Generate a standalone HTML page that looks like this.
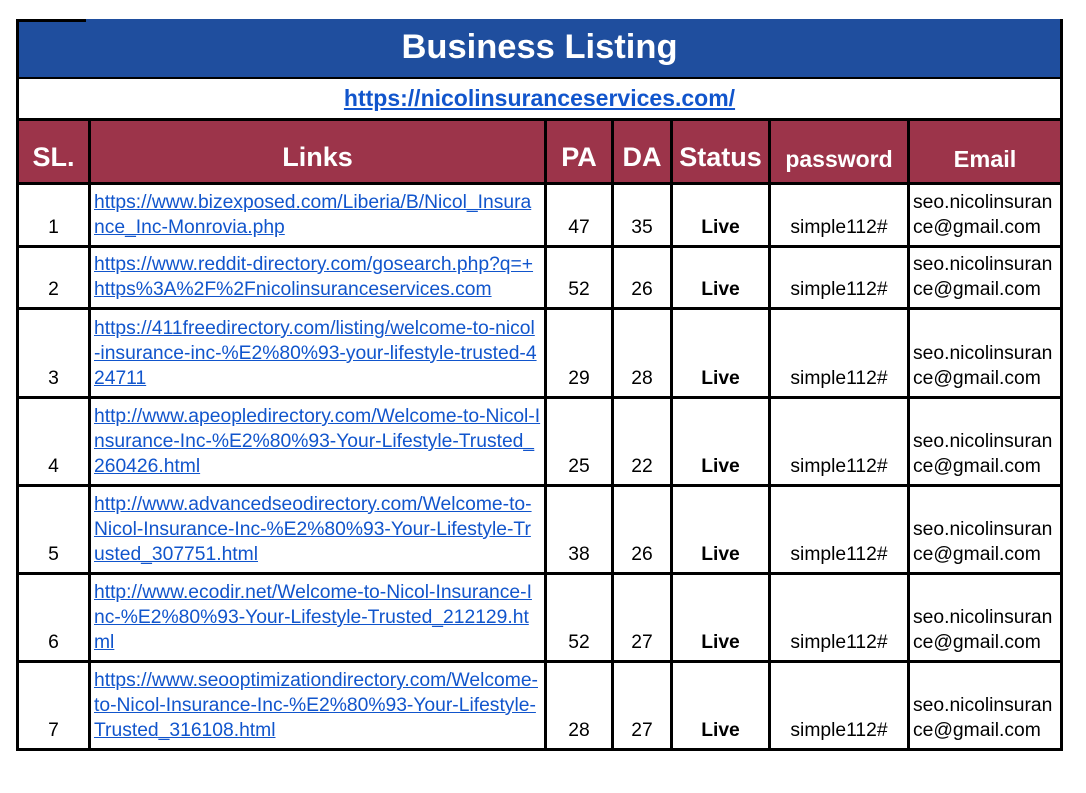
<!DOCTYPE html><html><head><meta charset="utf-8"><style>
body{margin:0;width:1086px;height:793px;background:#fff;position:relative;font-family:"Liberation Sans",Arial,sans-serif;overflow:hidden}
.a{position:absolute}
.c{position:absolute;background:#fff;display:flex;align-items:flex-end;justify-content:center;font-size:19.3px;line-height:25px;color:#000;padding-bottom:5px;box-sizing:border-box;text-align:center;white-space:nowrap}
.h{position:absolute;background:#9c344a;color:#fff;font-weight:bold;display:flex;align-items:center;justify-content:center;font-size:27px;padding-top:12px;box-sizing:border-box}
.l{justify-content:flex-start;text-align:left;padding-left:3px}
.l span{color:#1155cc;text-decoration:underline}
.e{justify-content:flex-start;text-align:left;padding-left:3px}
.b{font-weight:bold}
</style></head><body>
<div class="a" style="left:16px;top:76px;width:1047px;height:675px;background:#000"></div>
<div class="a" style="left:16px;top:19px;width:1047px;height:58px;background:#1f4e9e;color:#fff;font-weight:bold;font-size:34.5px;text-align:center;line-height:56px">Business Listing</div>
<div class="a" style="left:16px;top:19px;width:70px;height:3px;background:#000"></div>
<div class="a" style="left:16px;top:19px;width:3px;height:60px;background:#000"></div>
<div class="a" style="left:1060px;top:19px;width:3px;height:60px;background:#000"></div>
<div class="a" style="left:19px;top:79px;width:1041px;height:39px;background:#fff;text-align:center;font-weight:bold;font-size:23px;line-height:38px"><span style="color:#1155cc;text-decoration:underline">https://nicolinsuranceservices.com/</span></div>
<div class="h" style="left:19px;top:121px;width:69px;height:61px">SL.</div>
<div class="h" style="left:91px;top:121px;width:453px;height:61px">Links</div>
<div class="h" style="left:547px;top:121px;width:64px;height:61px">PA</div>
<div class="h" style="left:614px;top:121px;width:56px;height:61px">DA</div>
<div class="h" style="left:673px;top:121px;width:95px;height:61px">Status</div>
<div class="h" style="left:771px;top:121px;width:136px;height:61px;font-size:23px;padding-top:16px">password</div>
<div class="h" style="left:910px;top:121px;width:150px;height:61px;font-size:23.5px;padding-top:16px">Email</div>
<div id="rows"></div>
<script>
var R=[[185,60,"1","https://www.bizexposed.com/Liberia/B/Nicol_Insura<br>nce_Inc-Monrovia.php",47,35],
[248,59,"2","https://www.reddit-directory.com/gosearch.php?q=+<br>https%3A%2F%2Fnicolinsuranceservices.com",52,26],
[310,86,"3","https://411freedirectory.com/listing/welcome-to-nicol<br>-insurance-inc-%E2%80%93-your-lifestyle-trusted-4<br>24711",29,28],
[399,85,"4","http://www.apeopledirectory.com/Welcome-to-Nicol-I<br>nsurance-Inc-%E2%80%93-Your-Lifestyle-Trusted_<br>260426.html",25,22],
[487,85,"5","http://www.advancedseodirectory.com/Welcome-to-<br>Nicol-Insurance-Inc-%E2%80%93-Your-Lifestyle-Tr<br>usted_307751.html",38,26],
[575,85,"6","http://www.ecodir.net/Welcome-to-Nicol-Insurance-I<br>nc-%E2%80%93-Your-Lifestyle-Trusted_212129.ht<br>ml",52,27],
[663,85,"7","https://www.seooptimizationdirectory.com/Welcome-<br>to-Nicol-Insurance-Inc-%E2%80%93-Your-Lifestyle-<br>Trusted_316108.html",28,27]];
var h="";R.forEach(function(r){var t=r[0],ht=r[1];
function c(x,w,cls,txt){h+='<div class="c '+cls+'" style="left:'+x+'px;top:'+t+'px;width:'+w+'px;height:'+ht+'px">'+txt+'</div>';}
c(19,69,"",r[2]);c(91,453,"l","<span>"+r[3]+"</span>");c(547,64,"",r[4]);c(614,56,"",r[5]);c(673,95,"b","Live");c(771,136,"","simple112#");c(910,150,"e","seo.nicolinsuran<br>ce@gmail.com");});
document.getElementById("rows").innerHTML=h;
</script>
</body></html>
